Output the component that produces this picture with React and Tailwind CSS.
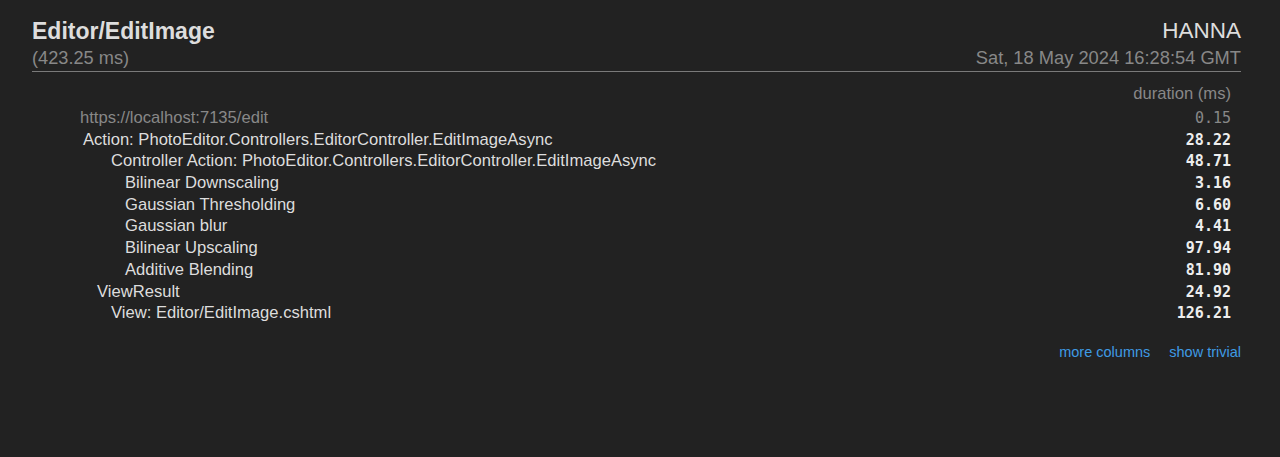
const rows = [
  { name: "https://localhost:7135/edit", ms: "0.15", indent: "pl-[48px]", muted: true },
  { name: "Action: PhotoEditor.Controllers.EditorController.EditImageAsync", ms: "28.22", indent: "pl-[51px]" },
  { name: "Controller Action: PhotoEditor.Controllers.EditorController.EditImageAsync", ms: "48.71", indent: "pl-[79px]" },
  { name: "Bilinear Downscaling", ms: "3.16", indent: "pl-[93px]" },
  { name: "Gaussian Thresholding", ms: "6.60", indent: "pl-[93px]" },
  { name: "Gaussian blur", ms: "4.41", indent: "pl-[93px]" },
  { name: "Bilinear Upscaling", ms: "97.94", indent: "pl-[93px]" },
  { name: "Additive Blending", ms: "81.90", indent: "pl-[93px]" },
  { name: "ViewResult", ms: "24.92", indent: "pl-[65px]" },
  { name: "View: Editor/EditImage.cshtml", ms: "126.21", indent: "pl-[79px]" },
];

function App() {
  return (
    <div className="h-[457px] bg-[#222222] pl-8 pr-[39px] pt-[18px] font-['Liberation_Sans',Arial,sans-serif] text-[#dddddd]">
      {/* Header */}
      <div className="flex justify-between border-b border-[#7a7a7a] pb-[2px]">
        <div>
          <h1 className="text-[23px] font-bold leading-[26px] text-[#dddddd]">Editor/EditImage</h1>
          <div className="mt-[3px] text-[18.2px] leading-[22px] text-[#888888]">(423.25 ms)</div>
        </div>
        <div className="text-right">
          <div className="text-[22.5px] leading-[26px] text-[#dddddd]">HANNA</div>
          <div className="mt-[3px] text-[18.3px] leading-[22px] text-[#888888]">Sat, 18 May 2024 16:28:54 GMT</div>
        </div>
      </div>

      {/* Timings */}
      <div className="mt-[11px] pr-[10px] text-[16.6px]">
        <div className="flex h-[24px] items-start justify-end leading-[21.7px] text-[#888888]">duration (ms)</div>
        {rows.map((r) => (
          <div key={r.name} className="flex h-[21.7px] items-baseline justify-between leading-[21.7px]">
            <span className={`${r.indent} ${r.muted ? "text-[#888888]" : "text-[#dddddd]"}`}>{r.name}</span>
            <span
              className={`font-['DejaVu_Sans_Mono',monospace] text-[15px] leading-[18px] ${
                r.muted ? "text-[#888888]" : "font-bold text-[#eeeeee]"
              }`}
            >
              {r.ms}
            </span>
          </div>
        ))}
      </div>

      {/* Footer links */}
      <div className="mt-[18px] flex justify-end gap-[19px] text-[14.5px] leading-[20px]">
        <a href="#" className="text-[#3f9be4]">more columns</a>
        <a href="#" className="text-[#3f9be4]">show trivial</a>
      </div>
    </div>
  );
}

export default App;
